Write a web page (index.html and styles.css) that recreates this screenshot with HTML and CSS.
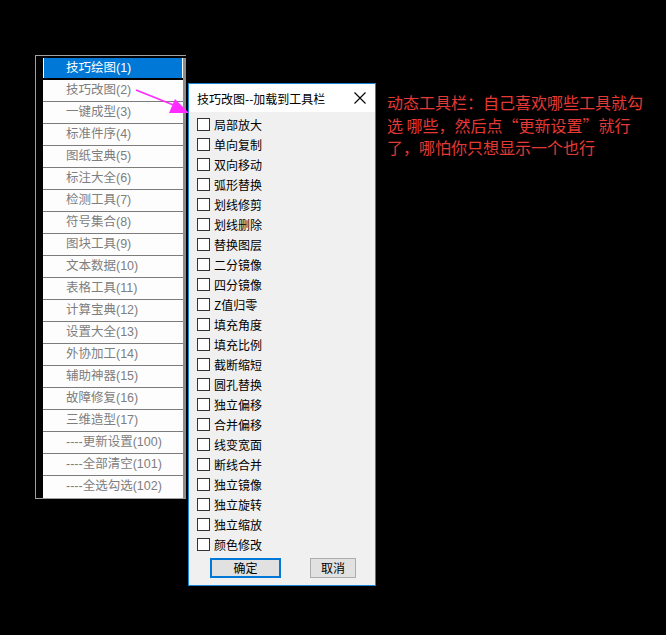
FILE: index.html
```html
<!DOCTYPE html>
<html lang="zh-CN">
<head>
  <meta charset="UTF-8" />
  <meta name="viewport" content="width=device-width, initial-scale=1.0"/>
  <title>技巧改图</title>
  <link rel="stylesheet" href="styles.css">
</head>
<body>
  <div class="screen">
    <div class="menu">
      <div class="menu-list">
        <div class="menu-item active">技巧绘图(1)</div>
        <div class="menu-item">技巧改图(2)</div>
        <div class="menu-item">一键成型(3)</div>
        <div class="menu-item">标准件序(4)</div>
        <div class="menu-item">图纸宝典(5)</div>
        <div class="menu-item">标注大全(6)</div>
        <div class="menu-item">检测工具(7)</div>
        <div class="menu-item">符号集合(8)</div>
        <div class="menu-item">图块工具(9)</div>
        <div class="menu-item">文本数据(10)</div>
        <div class="menu-item">表格工具(11)</div>
        <div class="menu-item">计算宝典(12)</div>
        <div class="menu-item">设置大全(13)</div>
        <div class="menu-item">外协加工(14)</div>
        <div class="menu-item">辅助神器(15)</div>
        <div class="menu-item">故障修复(16)</div>
        <div class="menu-item">三维造型(17)</div>
        <div class="menu-item">----更新设置(100)</div>
        <div class="menu-item">----全部清空(101)</div>
        <div class="menu-item">----全选勾选(102)</div>
      </div>
    </div>

    <div class="dialog">
      <div class="dialog-title">
        <span>技巧改图--加载到工具栏</span>
        <svg class="close" width="12" height="12" viewBox="0 0 12 12">
          <path d="M0.5 0.5 L11.5 11.5 M11.5 0.5 L0.5 11.5" stroke="#000" stroke-width="1.1" fill="none"/>
        </svg>
      </div>
      <div class="dialog-body">
        <div class="check-list">
          <label class="check"><span class="box"></span>局部放大</label>
          <label class="check"><span class="box"></span>单向复制</label>
          <label class="check"><span class="box"></span>双向移动</label>
          <label class="check"><span class="box"></span>弧形替换</label>
          <label class="check"><span class="box"></span>划线修剪</label>
          <label class="check"><span class="box"></span>划线删除</label>
          <label class="check"><span class="box"></span>替换图层</label>
          <label class="check"><span class="box"></span>二分镜像</label>
          <label class="check"><span class="box"></span>四分镜像</label>
          <label class="check"><span class="box"></span>Z值归零</label>
          <label class="check"><span class="box"></span>填充角度</label>
          <label class="check"><span class="box"></span>填充比例</label>
          <label class="check"><span class="box"></span>截断缩短</label>
          <label class="check"><span class="box"></span>圆孔替换</label>
          <label class="check"><span class="box"></span>独立偏移</label>
          <label class="check"><span class="box"></span>合并偏移</label>
          <label class="check"><span class="box"></span>线变宽面</label>
          <label class="check"><span class="box"></span>断线合并</label>
          <label class="check"><span class="box"></span>独立镜像</label>
          <label class="check"><span class="box"></span>独立旋转</label>
          <label class="check"><span class="box"></span>独立缩放</label>
          <label class="check"><span class="box"></span>颜色修改</label>
        </div>
        <div class="buttons">
          <button class="btn btn-ok">确定</button>
          <button class="btn btn-cancel">取消</button>
        </div>
      </div>
    </div>

    <div class="note">
      动态工具栏：自己喜欢哪些工具就勾<br>
      选 哪些，然后点“更新设置”就行<br>
      了，哪怕你只想显示一个也行
    </div>

    <!-- pointer from the menu entry to the dialog -->
    <svg class="arrow" width="666" height="635" viewBox="0 0 666 635">
      <line x1="136" y1="90" x2="176" y2="106" stroke="#ff2bff" stroke-width="1.6"/>
      <polygon points="189,113 169,113 175,99" fill="#ff2bff"/>
    </svg>
  </div>
</body>
</html>
```

FILE: styles.css
```css
body {
  margin: 0;
  background-color: #000;
}

.screen {
  position: relative;
  width: 666px;
  height: 635px;
  box-sizing: border-box;
  padding: 55px 0 0 35px;
  display: flex;
  align-items: flex-start;
}

.menu {
  border: 1px solid #a0a0a0;
  border-right: none;
  padding: 2px 0 0 7px;
  background-color: #000;
}

.menu-list {
  width: 140px;
  border-right: 3px solid #8c8c8c;
}

.menu-item {
  height: 21px;
  line-height: 21px;
  padding-left: 23px;
  background-color: #fdfdfd;
  border-bottom: 1px solid #7c7c7c;
  color: #7e7e7e;
  font-family: "Liberation Sans", "Noto Sans CJK SC", sans-serif;
  font-size: 12.5px;
  white-space: nowrap;
}

.menu-item:last-child {
  border-bottom: none;
  height: 22px;
}

.menu-item.active {
  background-color: #0078d7;
  color: #fff;
  border-bottom: none;
  height: 20px;
  margin-bottom: 2px;
  border-left: 1px solid #fff;
  border-right: 1px solid #fff;
  padding-left: 22px;
}

.dialog {
  margin: 28px 0 0 2px;
  width: 186px;
  border: 1px solid #1883d7;
  background-color: #f0f0f0;
  font-family: "Noto Sans CJK SC", sans-serif;
  font-size: 12px;
  color: #000;
}

.dialog-title {
  height: 28px;
  background-color: #fff;
  display: flex;
  align-items: center;
  justify-content: space-between;
  padding: 0 9px 0 8px;
}

.close {
  display: block;
}

.dialog-body {
  padding: 2px 0 7px 8px;
}

.check {
  display: flex;
  align-items: center;
  height: 20px;
  white-space: nowrap;
}

.box {
  width: 11px;
  height: 11px;
  border: 1px solid #333;
  background-color: #fff;
  margin-right: 4px;
}

.buttons {
  display: flex;
  margin-top: 4px;
  padding-left: 13px;
}

.btn {
  height: 20px;
  padding: 0;
  background-color: #e1e1e1;
  font-family: "Noto Sans CJK SC", sans-serif;
  font-size: 12px;
  color: #000;
  line-height: 16px;
}

.btn-ok {
  width: 71px;
  border: 2px solid #0078d7;
}

.btn-cancel {
  width: 46px;
  margin-left: 29px;
  border: 1px solid #adadad;
}

.note {
  margin: 36px 0 0 11px;
  color: #e53935;
  font-family: "Noto Sans CJK SC", sans-serif;
  font-size: 16px;
  line-height: 22.5px;
  white-space: nowrap;
}

.arrow {
  position: absolute;
  left: 0;
  top: 0;
  pointer-events: none;
}
```
